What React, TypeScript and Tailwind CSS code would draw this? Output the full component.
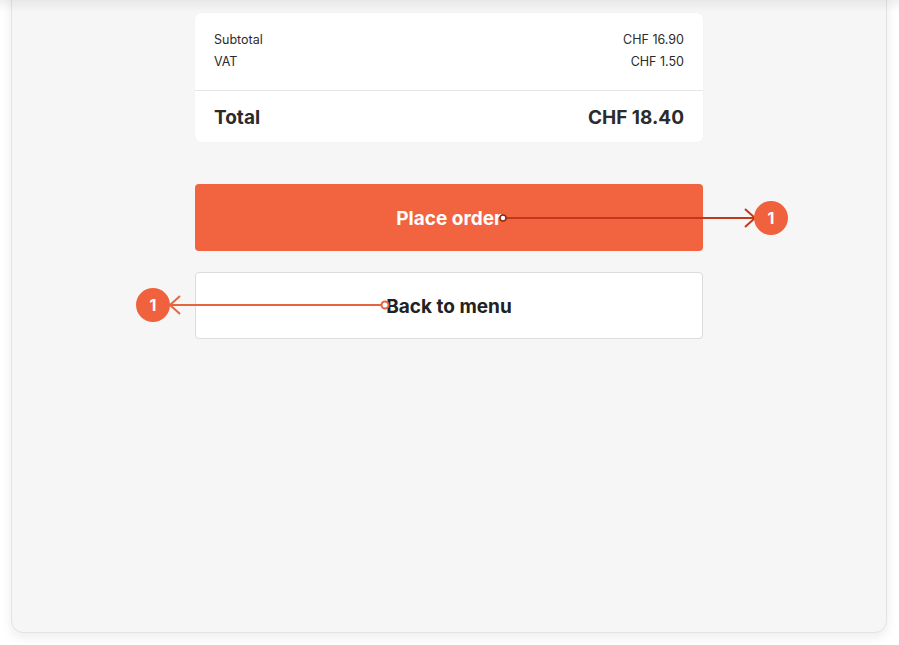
import React from "react";

export default function App() {
  return (
    <div
      className="relative w-[899px] h-[645px] overflow-hidden bg-white"
      style={{ fontFamily: "Inter, 'Noto Sans', sans-serif" }}
    >
      <div className="ml-[11px] -mt-[20px] w-[876px] h-[653px] rounded-[12px] border border-[#e3e3e3] bg-[#f6f6f6] shadow-[0_4px_12px_rgba(0,0,0,0.08)] pt-[32px]">
        <div className="mx-auto w-[508px] flex flex-col">
          <div className="rounded-[6px] bg-white shadow-[0_0_1px_rgba(0,0,0,0.08)]">
            <div className="px-[19px] pt-[16px] pb-[17px] text-[12.5px] leading-[22px] text-[#2b2b2b]">
              <div className="flex justify-between">
                <span>Subtotal</span>
                <span>CHF 16.90</span>
              </div>
              <div className="flex justify-between">
                <span>VAT</span>
                <span>CHF 1.50</span>
              </div>
            </div>
            <div className="border-t border-[#e6e6e6] px-[19px] pt-[14px] pb-[11px] flex justify-between text-[19px] leading-[26px] font-bold text-[#2b2b2b]">
              <span>Total</span>
              <span>CHF 18.40</span>
            </div>
          </div>
          <button className="mt-[42px] h-[67px] pt-[4px] rounded-[4px] bg-[#f2643f] text-white text-[19px] font-bold">
            Place order
          </button>
          <button className="mt-[21px] h-[67px] pt-[4px] rounded-[4px] bg-white border border-[#dcdcdc] text-[#222] text-[19px] font-bold">
            Back to menu
          </button>
        </div>
      </div>
      <div className="pointer-events-none absolute left-0 top-0 w-full h-[12px] bg-gradient-to-b from-[rgba(0,0,0,0.06)] to-transparent" />
      <svg className="pointer-events-none absolute left-0 top-0" width="899" height="645">
        <line x1="503" y1="218" x2="755" y2="218" stroke="#c0391c" strokeWidth="2" />
        <polyline points="745,209 755,218 745,227" fill="none" stroke="#c0391c" strokeWidth="2" />
        <circle cx="503" cy="218" r="3" fill="white" stroke="#8a2a14" strokeWidth="1.5" />
        <circle cx="771" cy="218" r="17" fill="#f0623d" />
        <text x="771" y="224" textAnchor="middle" fill="white" fontSize="16" fontWeight="700" fontFamily="Inter, sans-serif">1</text>

        <line x1="385" y1="305" x2="170" y2="305" stroke="#e8643f" strokeWidth="2" />
        <polyline points="180,296 170,305 180,314" fill="none" stroke="#e8643f" strokeWidth="2" />
        <circle cx="385" cy="305" r="3.5" fill="white" stroke="#e8643f" strokeWidth="2" />
        <circle cx="153" cy="305" r="17" fill="#f0623d" />
        <text x="153" y="311" textAnchor="middle" fill="white" fontSize="16" fontWeight="700" fontFamily="Inter, sans-serif">1</text>
      </svg>
    </div>
  );
}
